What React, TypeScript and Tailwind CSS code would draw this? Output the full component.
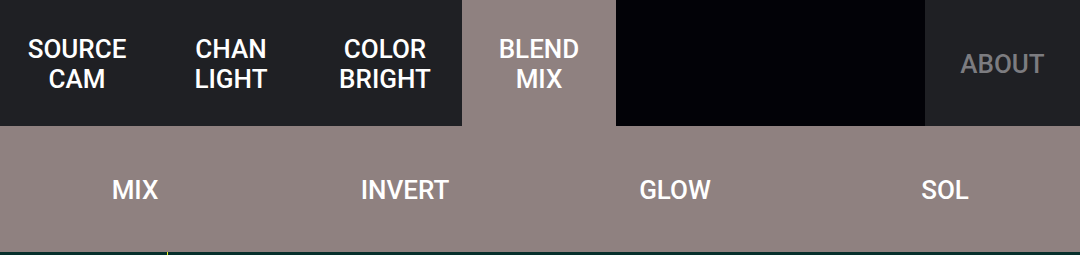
import React from 'react';

const tabs = [
    { top: 'SOURCE', bottom: 'CAM' },
    { top: 'CHAN', bottom: 'LIGHT' },
    { top: 'COLOR', bottom: 'BRIGHT' },
    { top: 'BLEND', bottom: 'MIX', active: true },
];

const modes = ['MIX', 'INVERT', 'GLOW', 'SOL'];

export default function App() {
    return (
        <div className="w-[1080px] h-[255px] flex flex-col bg-[#8f8180] font-['Roboto',sans-serif] font-medium text-white overflow-hidden">
            {/* Top nav */}
            <div className="flex h-[126px]">
                {tabs.map((t) => (
                    <div
                        key={t.top}
                        className={`w-[154px] flex flex-col items-center justify-center pt-[2px] text-[26px] leading-[30px] ${t.active ? 'bg-[#8f8180]' : 'bg-[#1f2024]'}`}
                    >
                        <span>{t.top}</span>
                        <span>{t.bottom}</span>
                    </div>
                ))}
                <div className="w-[309px] bg-[#020207]" />
                <div className="flex-1 flex items-center justify-center pt-[2px] bg-[#1f2024] text-[26px] text-[#7c7c80]">
                    ABOUT
                </div>
            </div>

            {/* Mode row */}
            <div className="grid grid-cols-4 h-[126px]">
                {modes.map((m) => (
                    <div key={m} className="flex items-center justify-center pt-[2px] text-[26px]">
                        {m}
                    </div>
                ))}
            </div>

            {/* Bottom strip */}
            <div className="h-[3px] bg-[#06302c] flex">
                <div className="w-[167px]" />
                <div className="w-px bg-[#e6f020]" />
            </div>
        </div>
    );
}
